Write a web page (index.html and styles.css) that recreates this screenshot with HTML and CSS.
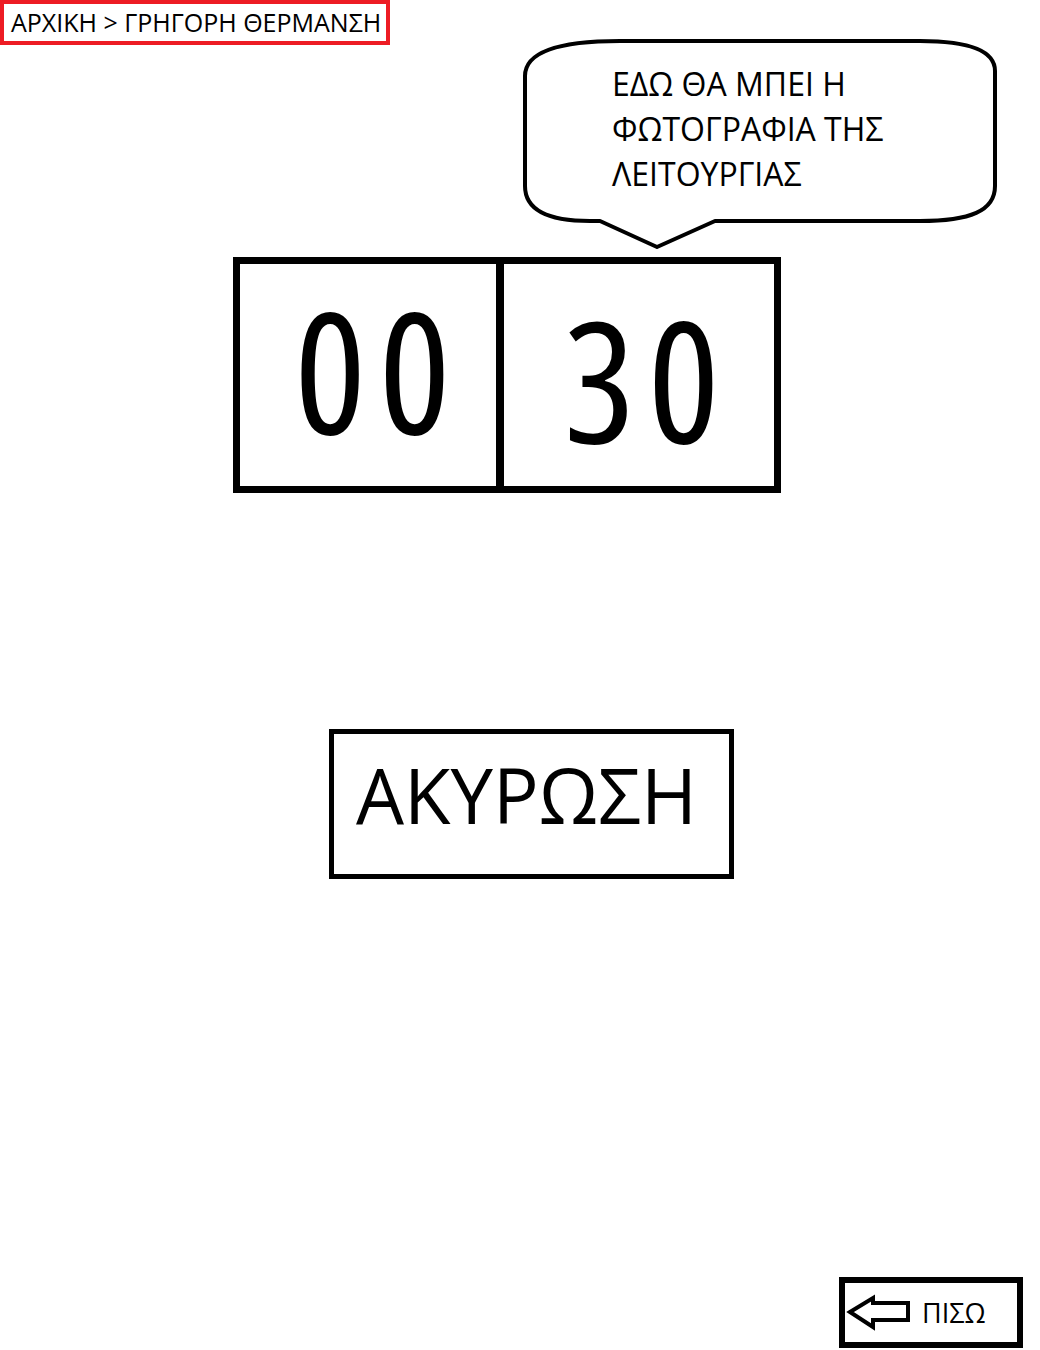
FILE: index.html
```html
<!DOCTYPE html>
<html lang="el">
<head>
<meta charset="utf-8">
<title>Γρήγορη θέρμανση</title>
<link rel="stylesheet" href="styles.css">
</head>
<body>
<div class="page">
  <div class="top">
    <div class="crumb">ΑΡΧΙΚΗ &gt; ΓΡΗΓΟΡΗ ΘΕΡΜΑΝΣΗ</div>
    <div class="bubble">
      <svg class="bubble-shape" width="480" height="216" viewBox="0 0 480 216" aria-hidden="true">
        <path d="M5,40 C5,15 40,5 100,5 L400,5 C450,5 475,15 475,35 L475,150 C475,175 450,185 400,185 L195,185 L137,211 L80,185 L70,185 C30,185 5,175 5,150 Z" fill="#fff" stroke="#000" stroke-width="4" stroke-linejoin="round"/>
      </svg>
      <p class="bubble-text">ΕΔΩ ΘΑ ΜΠΕΙ Η<br>ΦΩΤΟΓΡΑΦΙΑ ΤΗΣ<br>ΛΕΙΤΟΥΡΓΙΑΣ</p>
    </div>
  </div>
  <div class="timer">
    <div class="cell cell-min">00</div>
    <div class="cell cell-sec">30</div>
  </div>
  <button class="cancel" type="button">ΑΚΥΡΩΣΗ</button>
  <button class="back" type="button">
    <svg class="back-icon" width="66" height="38" viewBox="0 0 66 38" aria-hidden="true">
      <polygon points="4,18 27,4 27,9 62,9 62,26 27,26 27,33" fill="#fff" stroke="#000" stroke-width="4" stroke-linejoin="miter"/>
    </svg>
    <span class="back-label">ΠΙΣΩ</span>
  </button>
</div>
</body>
</html>
```

FILE: styles.css
```css
html, body {
  margin: 0;
  padding: 0;
  background: #fff;
}

body {
  font-family: "Open Sans", "Noto Sans", sans-serif;
  color: #000;
}

.page {
  display: flex;
  flex-direction: column;
  align-items: flex-start;
}

.top {
  display: flex;
  align-items: flex-start;
}

.crumb {
  box-sizing: border-box;
  width: 390px;
  height: 45px;
  border: 4px solid #ed1c24;
  padding-left: 7px;
  font-size: 25px;
  line-height: 37px;
  white-space: nowrap;
}

.bubble {
  position: relative;
  width: 480px;
  height: 216px;
  margin-top: 36px;
  margin-left: 130px;
}

.bubble-shape {
  position: absolute;
  left: 0;
  top: 0;
}

.bubble-text {
  position: relative;
  margin: 0;
  padding-left: 92px;
  padding-top: 25px;
  font-size: 32px;
  line-height: 45px;
  white-space: nowrap;
}

.timer {
  box-sizing: border-box;
  display: flex;
  width: 548px;
  height: 236px;
  margin-top: 5px;
  margin-left: 233px;
  border: 7px solid #000;
}

.cell {
  box-sizing: border-box;
  display: flex;
  align-items: center;
  justify-content: center;
  font-size: 168px;
  line-height: 1;
  font-stretch: 75%;
  letter-spacing: 13px;
}

.cell-min {
  width: 264px;
  border-right: 8px solid #000;
  padding-left: 22px;
  padding-bottom: 12px;
}

.cell-sec {
  flex: 1;
  padding-left: 18px;
  padding-top: 6px;
}

.cancel {
  box-sizing: border-box;
  display: flex;
  align-items: center;
  justify-content: center;
  width: 405px;
  height: 150px;
  margin-top: 236px;
  margin-left: 329px;
  padding: 0 10px 18px 0;
  border: 5px solid #000;
  background: #fff;
  color: #000;
  font-family: "Open Sans", "Noto Sans", sans-serif;
  font-size: 76px;
  line-height: 1;
}

.back {
  box-sizing: border-box;
  display: flex;
  align-items: center;
  gap: 10px;
  width: 184px;
  height: 71px;
  margin-top: 398px;
  margin-left: 839px;
  padding: 0 0 0 1px;
  border: 6px solid #000;
  background: #fff;
  color: #000;
  font-family: "Open Sans", "Noto Sans", sans-serif;
  font-size: 27px;
  line-height: 1;
}

.back-icon {
  display: block;
}
```
